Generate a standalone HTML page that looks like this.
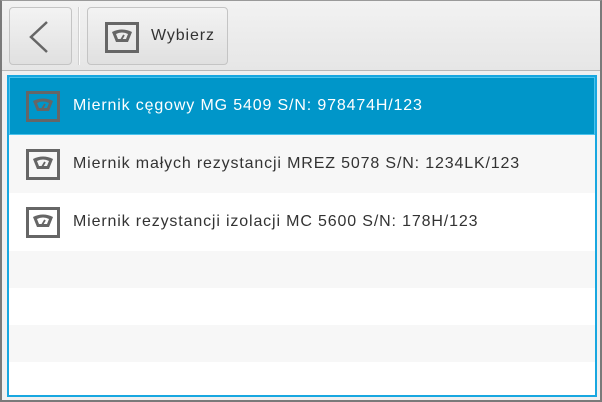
<!DOCTYPE html>
<html><head><style>
*{margin:0;padding:0;box-sizing:border-box}
body{width:602px;height:402px;overflow:hidden;background:#fff;font-family:"Liberation Sans",sans-serif}
#frame{position:absolute;left:0;top:0;width:602px;height:402px;border:2px solid #7a7a7a;border-top:1px solid #9a9a9a;background:#f0f0f0}
#tb{position:absolute;left:0;top:0;width:598px;height:70px;background:linear-gradient(#f2f2f2,#e6e6e6);border-bottom:1px solid #b8b8b8}
.btn{position:absolute;top:6px;height:58px;border:1px solid #c4c4c4;border-radius:4px;background:linear-gradient(#f3f3f3,#e0e0e0)}
#sep{position:absolute;left:76px;top:6px;width:2px;height:58px;border-left:1px solid #d0d0d0;border-right:1px solid #fafafa}
#list{position:absolute;left:5px;top:74px;width:590px;height:322px;border:2px solid #18a7e0;background:#fff;overflow:hidden}
.row{position:relative;height:58px;font-size:16px;letter-spacing:0.85px;color:#333;line-height:58px;padding-left:64px}
.row svg{position:absolute;left:17px;top:14px}
.sel{background:#0096c9;color:#fff;box-shadow:inset 0 0 0 1px #4cc3ec}
.g{background:#f7f7f7}
.e{height:37px}
</style></head><body>
<div id="frame">
<div id="tb">
 <div class="btn" style="left:7px;width:63px">
  <svg width="63" height="58" style="position:absolute;left:0;top:0"><polyline points="37,14 21,29 37,44" fill="none" stroke="#666" stroke-width="2.5"/></svg>
 </div>
 <div id="sep"></div>
 <div class="btn" style="left:85px;width:141px">
  <svg width="34" height="31" viewBox="0 0 34 31" style="position:absolute;left:17px;top:14px">
   <rect x="1.5" y="1.5" width="31" height="28" fill="none" stroke="#666" stroke-width="3"/>
   <path d="M7 10 Q17 5 27 10 L23 20 L11 20 Z" fill="#666"/>
   <path d="M11 12 Q17 9 23 12 L21 17 L13 17 Z" fill="#ececec"/>
   <line x1="16" y1="18" x2="19" y2="13" stroke="#666" stroke-width="1.8"/>
  </svg>
  <span style="position:absolute;left:63px;top:19px;font-size:16px;letter-spacing:0.9px;color:#333">Wybierz</span>
 </div>
</div>
<div id="list">
 <div class="row sel"><svg width="34" height="31" viewBox="0 0 34 31"><rect x="1.5" y="1.5" width="31" height="28" fill="none" stroke="#666" stroke-width="3"/><path d="M7 10 Q17 5 27 10 L23 20 L11 20 Z" fill="#666"/><path d="M11 12 Q17 9 23 12 L21 17 L13 17 Z" fill="#0096c9"/><line x1="16" y1="18" x2="19" y2="13" stroke="#666" stroke-width="1.8"/></svg>Miernik cęgowy MG 5409 S/N: 978474H/123</div>
 <div class="row g"><svg width="34" height="31" viewBox="0 0 34 31"><rect x="1.5" y="1.5" width="31" height="28" fill="none" stroke="#666" stroke-width="3"/><path d="M7 10 Q17 5 27 10 L23 20 L11 20 Z" fill="#666"/><path d="M11 12 Q17 9 23 12 L21 17 L13 17 Z" fill="#f7f7f7"/><line x1="16" y1="18" x2="19" y2="13" stroke="#666" stroke-width="1.8"/></svg>Miernik małych rezystancji MREZ 5078 S/N: 1234LK/123</div>
 <div class="row"><svg width="34" height="31" viewBox="0 0 34 31"><rect x="1.5" y="1.5" width="31" height="28" fill="none" stroke="#666" stroke-width="3"/><path d="M7 10 Q17 5 27 10 L23 20 L11 20 Z" fill="#666"/><path d="M11 12 Q17 9 23 12 L21 17 L13 17 Z" fill="#fff"/><line x1="16" y1="18" x2="19" y2="13" stroke="#666" stroke-width="1.8"/></svg>Miernik rezystancji izolacji MC 5600 S/N: 178H/123</div>
 <div class="row g e"></div>
 <div class="row e"></div>
 <div class="row g e"></div>
 <div class="row e"></div>
</div>
</div>
</body></html>
